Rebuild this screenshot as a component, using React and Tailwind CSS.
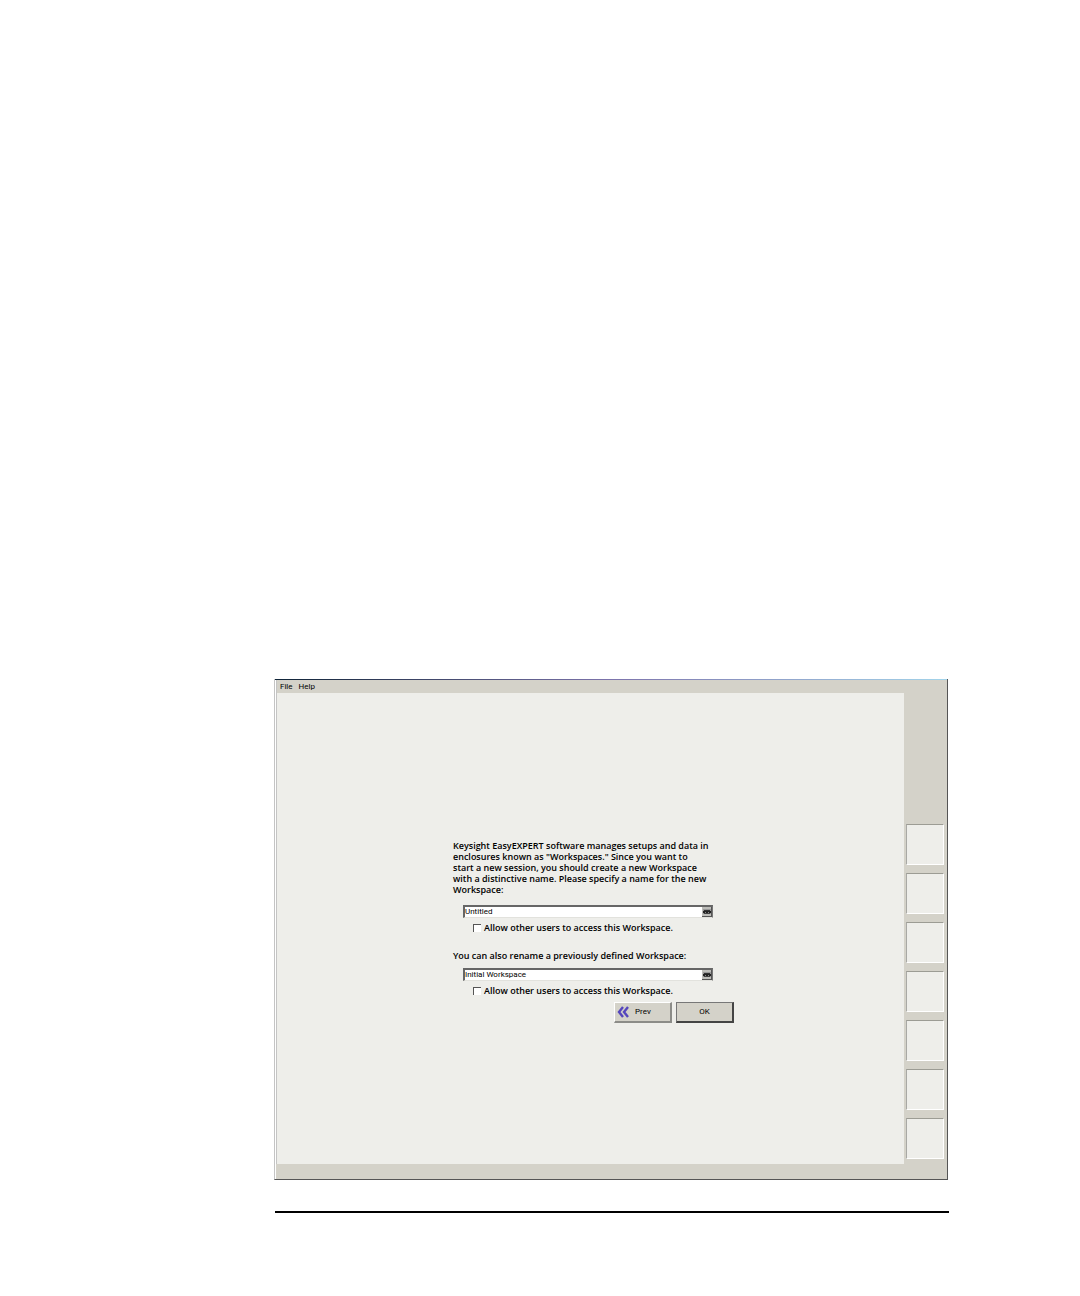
import { useState } from "react";

const SIDE_SLOTS = [1, 2, 3, 4, 5, 6, 7];

function KeyboardIcon() {
  return (
    <svg viewBox="0 0 8 7" className="w-2 h-[7px]" shapeRendering="crispEdges">
      <rect x="0" y="1" width="8" height="5" fill="#999" />
      <rect x="1" y="2" width="6" height="1" fill="#333" />
      <rect x="0" y="3" width="8" height="2" fill="#222" />
      <rect x="2" y="4" width="1" height="1" fill="#888" />
      <rect x="5" y="4" width="1" height="1" fill="#888" />
      <rect x="1" y="5" width="6" height="1" fill="#444" />
    </svg>
  );
}

function PrevIcon() {
  return (
    <svg viewBox="0 0 12 12" className="w-3 h-3" fill="none" stroke="#5546bd" strokeWidth="2.4">
      <path d="M6 1L2 6L6 11" />
      <path d="M11 1L7 6L11 11" />
    </svg>
  );
}

function WorkspaceField({ id, label, value, onChange, shared, onShare }) {
  return (
    <div className="pl-[10px]">
      <div className="flex w-[250px] h-[13px] bg-white border-t-2 border-l-2 border-r border-b border-t-[#666] border-l-[#666] border-r-[#777] border-b-[#e2e2dd]">
        <input
          id={id}
          type="text"
          aria-label={label}
          value={value}
          onChange={(e) => onChange(e.target.value)}
          className="flex-1 min-w-0 bg-white font-['Roboto',sans-serif] text-[8px] leading-[10px] outline-none"
        />
        <button
          type="button"
          aria-label="Open keyboard"
          className="flex items-center justify-center w-[10px] bg-[#bdbdb9] border-r border-b border-[#555]"
        >
          <KeyboardIcon />
        </button>
      </div>
      <label className="flex items-center gap-[3px] mt-1 pl-[10px] text-[9px] leading-[11px] font-semibold">
        <input
          type="checkbox"
          checked={shared}
          onChange={(e) => onShare(e.target.checked)}
          className="appearance-none w-2 h-2 bg-white border-t border-l border-[#555] checked:bg-[#555]"
        />
        Allow other users to access this Workspace.
      </label>
    </div>
  );
}

export default function App() {
  const [newName, setNewName] = useState("Untitled");
  const [oldName, setOldName] = useState("Initial Workspace");
  const [shareNew, setShareNew] = useState(false);
  const [shareOld, setShareOld] = useState(false);

  return (
    <div className="min-h-screen bg-white pt-[679px] pl-[274px] pr-[131px] font-['Open_Sans',sans-serif] text-black">
      <div className="mr-px bg-[#d4d2c9] border-l border-r border-b border-l-[#c4c4c4] border-r-[#555] border-b-[#555]">
        <div className="h-px bg-linear-to-r from-[#0f2438] via-[#7d74ac] to-[#a3d4ea]" />
        <div className="flex border-l border-white">
          {/* Menu and work area */}
          <div className="flex-1 flex flex-col border-l border-[#c4c4c4]">
            <nav className="flex items-center gap-[6px] h-[13px] pl-[3px] font-['Roboto',sans-serif] text-[8px] leading-[13px]">
              <button type="button">File</button>
              <button type="button">Help</button>
            </nav>

            <main className="flex-1 flex items-center justify-center bg-[#eeeeea] pl-[6px] pt-[6px]">
              <form className="w-[281px]" onSubmit={(e) => e.preventDefault()}>
                <p className="text-[9px] leading-[11px] font-semibold whitespace-nowrap">
                  Keysight EasyEXPERT software manages setups and data in
                  <br />
                  enclosures known as "Workspaces." Since you want to
                  <br />
                  start a new session, you should create a new Workspace
                  <br />
                  with a distinctive name. Please specify a name for the new
                  <br />
                  Workspace:
                </p>

                <div className="mt-[10px]">
                  <WorkspaceField
                    id="new-workspace"
                    label="New Workspace name"
                    value={newName}
                    onChange={setNewName}
                    shared={shareNew}
                    onShare={setShareNew}
                  />
                </div>

                <p className="mt-[17px] mb-[7px] text-[9px] leading-[11px] font-semibold">
                  You can also rename a previously defined Workspace:
                </p>
                <WorkspaceField
                  id="old-workspace"
                  label="Previously defined Workspace name"
                  value={oldName}
                  onChange={setOldName}
                  shared={shareOld}
                  onShare={setShareOld}
                />

                <div className="flex justify-end gap-1 mt-[6px] font-['Roboto',sans-serif] text-[8px]">
                  <button
                    type="button"
                    className="flex items-center gap-[6px] w-[58px] h-[21px] pl-[2px] bg-[#d4d2c9] border-t border-l border-r-2 border-b-2 border-t-white border-l-white border-r-[#8c8c88] border-b-[#8c8c88]"
                  >
                    <PrevIcon />
                    Prev
                  </button>
                  <button
                    type="submit"
                    className="w-[58px] h-[21px] bg-[#d4d2c9] border-t border-l border-r-2 border-b-2 border-t-[#777] border-l-[#777] border-r-[#444] border-b-[#444]"
                  >
                    OK
                  </button>
                </div>
              </form>
            </main>
          </div>

          {/* Side slots */}
          <aside className="flex flex-col gap-2 w-[43px] pt-36 pb-[5px] pl-[2px] pr-[3px]">
            {SIDE_SLOTS.map((slot) => (
              <div
                key={slot}
                className="h-[41px] bg-[#eeeeea] border-t border-l border-r border-b border-t-[#9c9c94] border-l-[#a8a8a4] border-r-white border-b-white"
              />
            ))}
          </aside>
        </div>
        <footer className="h-[15px] border-l border-white" />
      </div>
      <hr className="mt-[31px] ml-px h-[2px] border-0 bg-black" />
    </div>
  );
}
